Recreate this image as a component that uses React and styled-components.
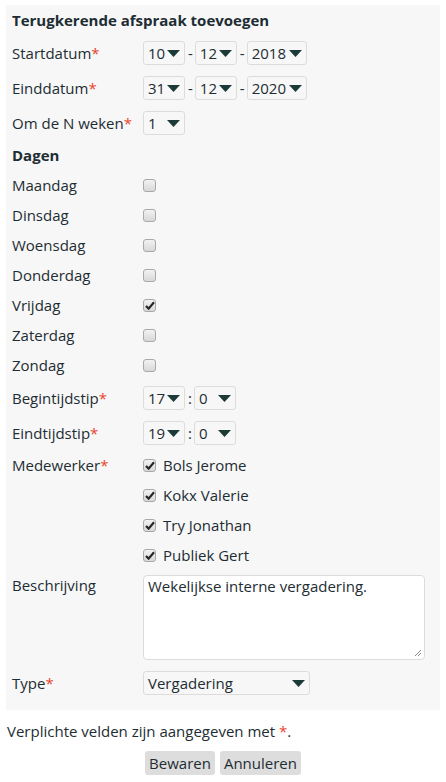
import React from 'react';
import styled, { createGlobalStyle } from 'styled-components';

const GlobalStyle = createGlobalStyle`
  body {
    margin: 0;
    background: #fff;
    font-family: 'Open Sans', 'Liberation Sans', sans-serif;
    font-size: 15px;
    color: #1d2d33;
  }
`;

const Page = styled.div`
  width: 446px;
  padding-top: 5px;
`;

const Panel = styled.section`
  margin: 0 6px;
  background: #f7f7f7;
  padding: 0 6px 11px;
`;

const Title = styled.h3`
  margin: 0;
  height: 30px;
  padding-top: 5px;
  box-sizing: border-box;
  font-size: 15px;
  line-height: 20px;
  font-weight: 700;
`;

const Row = styled.div`
  display: flex;
  align-items: ${(p) => (p.top ? 'flex-start' : 'center')};
  height: ${(p) => p.h}px;
`;

const Label = styled.div`
  width: 131px;
  flex-shrink: 0;
  line-height: 20px;
  padding-top: ${(p) => (p.top ? '5px' : 0)};
`;

const Sub = styled.div`
  font-weight: 700;
  line-height: 20px;
`;

const Req = styled.span`
  color: #e8452c;
`;

const Controls = styled.div`
  display: flex;
  align-items: center;
`;

const Sep = styled.span`
  margin: 0 2px 0 3px;
  line-height: 20px;
`;

const SelectBox = styled.div`
  position: relative;
  width: ${(p) => p.w}px;
  height: 24px;
  box-sizing: border-box;
  border: 1px solid #dcdcdc;
  border-radius: 3px;
  background: #f7f7f7;
  display: flex;
  align-items: center;
  padding-left: 4px;
  line-height: 20px;
`;

const Arrow = styled.svg`
  position: absolute;
  right: 4px;
  top: 8px;
`;

const Select = ({ w, value }) => (
  <SelectBox w={w}>
    {value}
    <Arrow width="13" height="7" viewBox="0 0 13 7">
      <path d="M0 0H13L6.5 7Z" fill="#1b3a38" />
    </Arrow>
  </SelectBox>
);

const Box = styled.span`
  display: inline-flex;
  align-items: center;
  justify-content: center;
  width: 13px;
  height: 13px;
  box-sizing: border-box;
  border: 1px solid #a9a9a9;
  border-radius: 3px;
  background: linear-gradient(#f2f2f2, #d8d8d8);
`;

const Check = ({ checked }) => (
  <Box>
    {checked && (
      <svg width="10" height="9" viewBox="0 0 10 9">
        <path d="M1 5L3.6 7.6L9 1.2" stroke="#262626" strokeWidth="2.2" fill="none" />
      </svg>
    )}
  </Box>
);

const Person = styled.span`
  margin-left: 7px;
  line-height: 20px;
`;

const TextArea = styled.div`
  position: relative;
  margin-top: 5px;
  width: 282px;
  height: 85px;
  box-sizing: border-box;
  border: 1px solid #dcdcdc;
  border-radius: 4px;
  background: #fff;
  padding: 0 4px;
  line-height: 20px;
`;

const Grip = styled.svg`
  position: absolute;
  right: 2px;
  bottom: 2px;
`;

const Note = styled.p`
  margin: 11px 0 0 7px;
  line-height: 20px;
`;

const Buttons = styled.div`
  display: flex;
  justify-content: center;
  gap: 5px;
  margin-top: 10px;
`;

const Button = styled.button`
  height: 24px;
  padding: 0 4px;
  border: none;
  border-radius: 3px;
  background: #dddddd;
  font-family: inherit;
  font-size: 15px;
  color: #1d2d33;
`;

const days = [
  ['Maandag', false],
  ['Dinsdag', false],
  ['Woensdag', false],
  ['Donderdag', false],
  ['Vrijdag', true],
  ['Zaterdag', false],
  ['Zondag', false],
];

const people = ['Bols Jerome', 'Kokx Valerie', 'Try Jonathan', 'Publiek Gert'];

export default function App() {
  return (
    <Page>
      <GlobalStyle />
      <Panel>
        <Title>Terugkerende afspraak toevoegen</Title>
        <Row h={35}>
          <Label>Startdatum<Req>*</Req></Label>
          <Controls>
            <Select w={42} value="10" />
            <Sep>-</Sep>
            <Select w={42} value="12" />
            <Sep>-</Sep>
            <Select w={60} value="2018" />
          </Controls>
        </Row>
        <Row h={35}>
          <Label>Einddatum<Req>*</Req></Label>
          <Controls>
            <Select w={42} value="31" />
            <Sep>-</Sep>
            <Select w={42} value="12" />
            <Sep>-</Sep>
            <Select w={60} value="2020" />
          </Controls>
        </Row>
        <Row h={35}>
          <Label>Om de N weken<Req>*</Req></Label>
          <Select w={42} value="1" />
        </Row>
        <Row h={30}>
          <Sub>Dagen</Sub>
        </Row>
        {days.map(([d, c]) => (
          <Row h={30} key={d}>
            <Label>{d}</Label>
            <Check checked={c} />
          </Row>
        ))}
        <Row h={35}>
          <Label>Begintijdstip<Req>*</Req></Label>
          <Controls>
            <Select w={42} value="17" />
            <Sep>:</Sep>
            <Select w={42} value="0" />
          </Controls>
        </Row>
        <Row h={35}>
          <Label>Eindtijdstip<Req>*</Req></Label>
          <Controls>
            <Select w={42} value="19" />
            <Sep>:</Sep>
            <Select w={42} value="0" />
          </Controls>
        </Row>
        {people.map((p, i) => (
          <Row h={30} key={p}>
            <Label>{i === 0 && <>Medewerker<Req>*</Req></>}</Label>
            <Check checked />
            <Person>{p}</Person>
          </Row>
        ))}
        <Row h={97} top>
          <Label top>Beschrijving</Label>
          <TextArea>
            Wekelijkse interne vergadering.
            <Grip width="8" height="8" viewBox="0 0 8 8">
              <path d="M1 7L7 1M4 7L7 4" stroke="#888" strokeWidth="1" />
            </Grip>
          </TextArea>
        </Row>
        <Row h={32}>
          <Label>Type<Req>*</Req></Label>
          <Select w={167} value="Vergadering" />
        </Row>
      </Panel>
      <Note>Verplichte velden zijn aangegeven met <Req>*</Req>.</Note>
      <Buttons>
        <Button>Bewaren</Button>
        <Button>Annuleren</Button>
      </Buttons>
    </Page>
  );
}
